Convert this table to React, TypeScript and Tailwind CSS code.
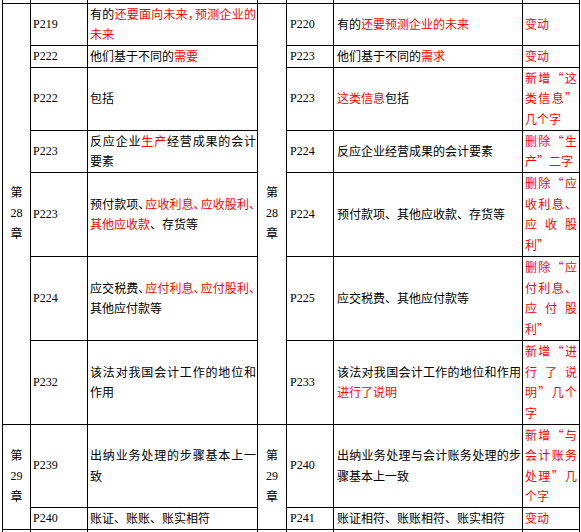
import React from 'react';

type Seg = [string, number?];
type Line = { j?: boolean; t?: boolean; s: Seg[] };

interface Row {
    h: string;
    lp: string;
    lt: Line[];
    rp: string;
    rt: Line[];
    note: Line[];
}

// each cell is written line by line so the wrapping matches the printed table
const rows: Row[] = [
    {
        h: 'h-[42px]',
        lp: 'P219',
        lt: [{ j: true, t: true, s: [['有的'], ['还要面向未来，预测企业的', 1]] }, { s: [['未来', 1]] }],
        rp: 'P220',
        rt: [{ s: [['有的'], ['还要预测企业的未来', 1]] }],
        note: [{ s: [['变动', 1]] }],
    },
    {
        h: 'h-[22px]',
        lp: 'P222',
        lt: [{ s: [['他们基于不同的'], ['需要', 1]] }],
        rp: 'P223',
        rt: [{ s: [['他们基于不同的'], ['需求', 1]] }],
        note: [{ s: [['变动', 1]] }],
    },
    {
        h: 'h-[63px]',
        lp: 'P222',
        lt: [{ s: [['包括']] }],
        rp: 'P223',
        rt: [{ s: [['这类信息', 1], ['包括']] }],
        note: [{ j: true, s: [['新增“这', 1]] }, { j: true, s: [['类信息”', 1]] }, { s: [['几个字', 1]] }],
    },
    {
        h: 'h-[42px]',
        lp: 'P223',
        lt: [{ j: true, s: [['反应企业'], ['生产', 1], ['经营成果的会计']] }, { s: [['要素']] }],
        rp: 'P224',
        rt: [{ s: [['反应企业经营成果的会计要素']] }],
        note: [{ j: true, s: [['删除“生', 1]] }, { s: [['产”二字', 1]] }],
    },
    {
        h: 'h-[84px]',
        lp: 'P223',
        lt: [
            { j: true, t: true, s: [['预付款项、'], ['应收利息、应收股利、', 1]] },
            { s: [['其他应收款', 1], ['、存货等']] },
        ],
        rp: 'P224',
        rt: [{ s: [['预付款项、其他应收款、存货等']] }],
        note: [
            { j: true, s: [['删除“应', 1]] },
            { j: true, s: [['收利息、', 1]] },
            { j: true, s: [['应收股', 1]] },
            { s: [['利”', 1]] },
        ],
    },
    {
        h: 'h-[84px]',
        lp: 'P224',
        lt: [
            { j: true, t: true, s: [['应交税费、'], ['应付利息、应付股利、', 1]] },
            { s: [['其他应付款等']] },
        ],
        rp: 'P225',
        rt: [{ s: [['应交税费、其他应付款等']] }],
        note: [
            { j: true, s: [['删除“应', 1]] },
            { j: true, s: [['付利息、', 1]] },
            { j: true, s: [['应付股', 1]] },
            { s: [['利”', 1]] },
        ],
    },
    {
        h: 'h-[84px]',
        lp: 'P232',
        lt: [{ j: true, s: [['该法对我国会计工作的地位和']] }, { s: [['作用']] }],
        rp: 'P233',
        rt: [{ j: true, s: [['该法对我国会计工作的地位和作用']] }, { s: [['进行了说明', 1]] }],
        note: [
            { j: true, s: [['新增“进', 1]] },
            { j: true, s: [['行了说', 1]] },
            { j: true, s: [['明”几个', 1]] },
            { s: [['字', 1]] },
        ],
    },
    {
        h: 'h-[83px]',
        lp: 'P239',
        lt: [{ j: true, s: [['出纳业务处理的步骤基本上一']] }, { s: [['致']] }],
        rp: 'P240',
        rt: [{ j: true, s: [['出纳业务处理与会计账务处理的步']] }, { s: [['骤基本上一致']] }],
        note: [
            { j: true, s: [['新增“与', 1]] },
            { j: true, s: [['会计账务', 1]] },
            { j: true, s: [['处理”几', 1]] },
            { s: [['个字', 1]] },
        ],
    },
    {
        h: 'h-[22px]',
        lp: 'P240',
        lt: [{ s: [['账证、账账、账实相符']] }],
        rp: 'P241',
        rt: [{ s: [['账证相符、账账相符、账实相符']] }],
        note: [{ s: [['变动', 1]] }],
    },
];

const cjk = "font-['Noto_Sans_CJK_SC',sans-serif]";
const serif = "font-['Liberation_Serif','Noto_Sans_CJK_SC',serif]";
const td = 'border border-black p-0 align-middle';

function text(str: string, tight?: boolean) {
    if (!tight) return str;
    // squeeze the full-width commas so the long lines fit like the print
    return str.split(/([、，])/).map((p, i) =>
        p === '、' || p === '，' ? (
            <span key={i} className="tracking-[-5px]">{p}</span>
        ) : (
            p
        )
    );
}

function Lines({ lines }: { lines: Line[] }) {
    return (
        <>
            {lines.map((ln, i) => (
                <div
                    key={i}
                    className={ln.j ? 'whitespace-nowrap text-justify [text-align-last:justify]' : 'whitespace-nowrap'}
                >
                    {ln.s.map(([s, r], k) => (
                        <span key={k} className={r ? 'text-[#ff0000]' : 'text-black'}>
                            {text(s, ln.t)}
                        </span>
                    ))}
                </div>
            ))}
        </>
    );
}

function Chapter({ n }: { n: string }) {
    return (
        <div className={`${serif} text-center`}>
            <div>第</div>
            <div>{n}</div>
            <div>章</div>
        </div>
    );
}

export default function App() {
    return (
        <div className="h-[532px] w-[581px] overflow-hidden bg-white">
            <table
                className={`ml-[2px] w-[577px] table-fixed border-collapse text-[12px] leading-[20.5px] text-black ${cjk} [text-spacing-trim:space-all]`}
            >
                <colgroup>
                    <col className="w-[28px]" />
                    <col className="w-[57px]" />
                    <col className="w-[170px]" />
                    <col className="w-[29px]" />
                    <col className="w-[47px]" />
                    <col className="w-[189px]" />
                    <col className="w-[57px]" />
                </colgroup>
                <tbody>
                    <tr className="h-[3px]">
                        {[0, 1, 2, 3, 4, 5, 6].map(i => (
                            <td key={i} className="border-x border-black p-0" />
                        ))}
                    </tr>
                    {rows.map((row, i) => (
                        <tr key={i} className={row.h}>
                            {i === 0 && (
                                <td rowSpan={7} className={td}>
                                    <Chapter n="28" />
                                </td>
                            )}
                            {i === 7 && (
                                <td rowSpan={2} className={td}>
                                    <Chapter n="29" />
                                </td>
                            )}
                            <td className={`${td} pl-[2px] ${serif}`}>{row.lp}</td>
                            <td className={`${td} pl-[2px] pr-[1px]`}>
                                <Lines lines={row.lt} />
                            </td>
                            {i === 0 && (
                                <td rowSpan={7} className={td}>
                                    <Chapter n="28" />
                                </td>
                            )}
                            {i === 7 && (
                                <td rowSpan={2} className={td}>
                                    <Chapter n="29" />
                                </td>
                            )}
                            <td className={`${td} pl-[3px] ${serif}`}>{row.rp}</td>
                            <td className={`${td} pl-[3px] pr-[1px]`}>
                                <Lines lines={row.rt} />
                            </td>
                            <td className={`${td} pl-[2px] pr-[2px]`}>
                                <Lines lines={row.note} />
                            </td>
                        </tr>
                    ))}
                    <tr className="h-[20px]">
                        {[0, 1, 2, 3, 4, 5, 6].map(i => (
                            <td key={i} className={td} />
                        ))}
                    </tr>
                </tbody>
            </table>
        </div>
    );
}
